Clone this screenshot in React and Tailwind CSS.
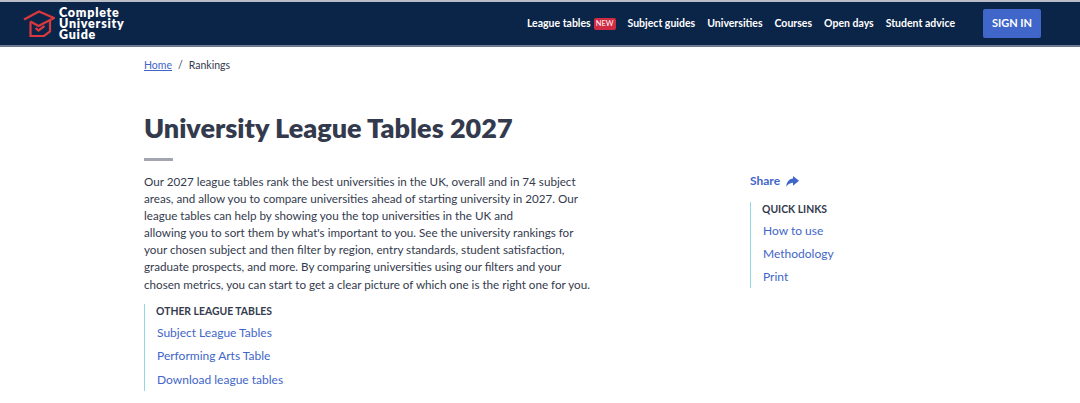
const navItems = ['Subject guides', 'Universities', 'Courses', 'Open days', 'Student advice'];

const intro = [
  'Our 2027 league tables rank the best universities in the UK, overall and in 74 subject',
  'areas, and allow you to compare universities ahead of starting university in 2027. Our',
  'league tables can help by showing you the top universities in the UK and',
  'allowing you to sort them by what\'s important to you. See the university rankings for',
  'your chosen subject and then filter by region, entry standards, student satisfaction,',
  'graduate prospects, and more. By comparing universities using our filters and your',
  'chosen metrics, you can start to get a clear picture of which one is the right one for you.',
];

function Logo() {
  return (
    <svg width="32" height="28" viewBox="0 0 32 28" fill="none" stroke="#d9393e" strokeWidth="2.2">
      <path d="M1 9.5 16 1.5 31 8 15.5 16 7.5 11.5" />
      <path d="M7.5 11.5V26h13.5l6-4.5V10" />
      <path d="m12.5 18 3 2.5 6-4.5" />
    </svg>
  );
}

function LinkBlock({ title, links, listClass }) {
  return (
    <div className="flex flex-col border-l border-[#8fd8e6] pb-[2px] pl-[11px]">
      <p className="text-[10.4px] leading-[14px] font-bold text-[#343a4d]">{title}</p>
      <ul className={`flex flex-col pl-px ${listClass}`}>
        {links.map((link) => (
          <li key={link} className="text-[12px] leading-[18px] text-[#3f66c8]">{link}</li>
        ))}
      </ul>
    </div>
  );
}

export default function App() {
  return (
    <div className="h-[403px] overflow-hidden bg-white font-['Lato','Noto_Sans',sans-serif] text-[#343a4d]">
      <header className="flex h-[47px] items-center border-t-2 border-b-2 border-t-[#b9bec6] border-b-[#6b7a8f] bg-[#0b2549] pr-[39px] pl-[23px]">
        <Logo />
        <div className="ml-[4px] text-[12.5px] leading-[11px] font-extrabold tracking-[0.75px] text-white">
          Complete<br />University<br />Guide
        </div>
        <nav className="ml-auto flex items-center gap-[12px] text-[10.5px] font-bold text-white">
          <span className="flex items-center gap-[3px]">
            League tables
            <span className="rounded-[2px] bg-[#cf2b43] px-[2px] py-[1px] text-[7.5px] leading-[10px] font-normal">NEW</span>
          </span>
          {navItems.map((item) => (
            <span key={item}>{item}</span>
          ))}
          <button type="button" className="ml-[16px] h-[29px] w-[58px] rounded-[2px] bg-[#3f66c8] text-[11px] font-bold text-white">
            SIGN IN
          </button>
        </nav>
      </header>

      <main className="flex pl-[144px]">
        <div className="w-[606px]">
          <div className="mt-[11px] flex gap-[6px] text-[10.5px] leading-[14px]">
            <a className="text-[#3f66c8] underline">Home</a>
            <span>/</span>
            <span>Rankings</span>
          </div>
          <h1 className="mt-[38px] text-[27px] leading-[36px] font-extrabold whitespace-nowrap text-[#343a4d]">
            University League Tables 2027
          </h1>
          <div className="mt-[12px] h-[3px] w-[29px] bg-[#a3a5b0]" />
          <p className="mt-[12px] text-[11.65px] leading-[17.1px] whitespace-nowrap">
            {intro.map((line) => (
              <span key={line} className="block">{line}</span>
            ))}
          </p>
          <div className="mt-[11px]">
            <LinkBlock
              title="OTHER LEAGUE TABLES"
              links={['Subject League Tables', 'Performing Arts Table', 'Download league tables']}
              listClass="mt-[6px] gap-[5.6px]"
            />
          </div>
        </div>
        <aside className="mt-[125px]">
          <div className="flex items-center gap-[6px] text-[12px] leading-[18px] font-bold text-[#3f66c8]">
            Share
            <svg width="13" height="11" viewBox="0 0 13 11" fill="currentColor">
              <path d="M7 0 13 4.8 7 9.8V6.8C4.4 6.8 2.4 7.8.3 10.8.6 6.2 3 3 7 2.6z" />
            </svg>
          </div>
          <div className="mt-[12px]">
            <LinkBlock title="QUICK LINKS" links={['How to use', 'Methodology', 'Print']} listClass="mt-[6px] gap-[5px]" />
          </div>
        </aside>
      </main>
    </div>
  );
}
